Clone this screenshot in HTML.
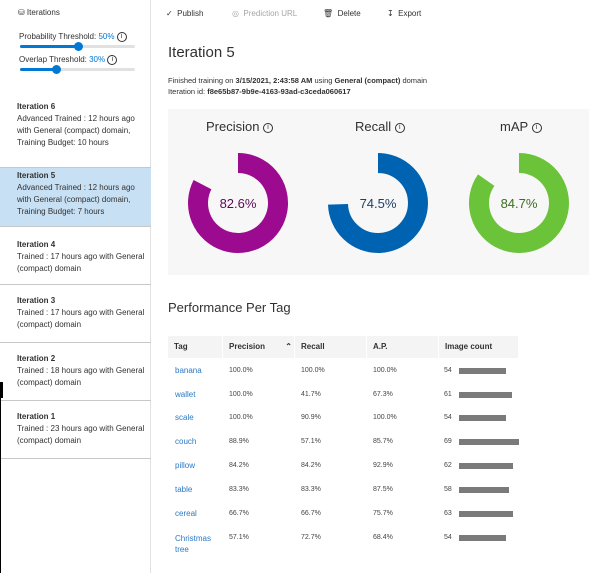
<!DOCTYPE html>
<html><head><meta charset="utf-8"><style>
*{margin:0;padding:0;box-sizing:border-box}
body{width:608px;height:573px;background:#fff;font-family:"Liberation Sans",sans-serif;color:#323130;position:relative;overflow:hidden;font-size:8px}
.a{position:absolute;white-space:nowrap}
.side{position:absolute;left:0;top:0;width:151px;height:573px;border-right:1px solid #e1e1e1}
.it{position:absolute;left:0;width:151px;border-bottom:1px solid #c8c8c8}
.it b{position:absolute;left:17px;font-size:8px;font-weight:bold;color:#323130}
.it p{position:absolute;left:17px;font-size:8px;line-height:12px;color:#323130}
.track{position:absolute;left:20px;width:115px;height:3px;background:#e1e1e1;border-radius:2px}
.fill{position:absolute;left:0;top:0;height:3px;background:#0078d4;border-radius:2px}
.knob{position:absolute;top:-3px;width:9px;height:9px;border-radius:50%;background:#0078d4}
.info{display:inline-block;width:10px;height:10px;border:1px solid #323130;border-radius:50%;font-size:7px;text-align:center;line-height:8px;vertical-align:middle}
.th{position:absolute;top:336px;height:22px;background:#f4f4f4;font-weight:bold;font-size:8px;line-height:22px;padding-left:6px}
.tag{color:#2b78c5;font-size:8px}
.c{font-size:7px;color:#444}
.bar{position:absolute;height:6px;background:#7a7a7a}
</style></head><body>
<div class="side">
<div class="a" style="left:18px;top:8px;font-size:8px">&#9921; Iterations</div>
<div class="a" style="left:19px;top:32px;font-size:8px">Probability Threshold: <span style="color:#0078d4">50%</span> <span class="info">i</span></div>
<div class="track" style="top:45px"><div class="fill" style="width:58px"></div><div class="knob" style="left:54px"></div></div>
<div class="a" style="left:19px;top:55px;font-size:8px">Overlap Threshold: <span style="color:#0078d4">30%</span> <span class="info">i</span></div>
<div class="track" style="top:68px"><div class="fill" style="width:36px"></div><div class="knob" style="left:32px"></div></div>
<div class="it" style="top:92px;height:76px"><b style="top:10px">Iteration 6</b><p style="top:21px">Advanced Trained : 12 hours ago<br>with General (compact) domain,<br>Training Budget: 10 hours</p></div>
<div class="it" style="top:168px;height:59px;background:#c7e0f4"><b style="top:3px">Iteration 5</b><p style="top:14px">Advanced Trained : 12 hours ago<br>with General (compact) domain,<br>Training Budget: 7 hours</p></div>
<div class="it" style="top:227px;height:58px"><b style="top:13px">Iteration 4</b><p style="top:24px">Trained : 17 hours ago with General<br>(compact) domain</p></div>
<div class="it" style="top:285px;height:58px"><b style="top:11px">Iteration 3</b><p style="top:22px">Trained : 17 hours ago with General<br>(compact) domain</p></div>
<div class="it" style="top:343px;height:58px"><b style="top:11px">Iteration 2</b><p style="top:22px">Trained : 18 hours ago with General<br>(compact) domain</p></div>
<div class="it" style="top:401px;height:58px"><b style="top:11px">Iteration 1</b><p style="top:22px">Trained : 23 hours ago with General<br>(compact) domain</p></div>
</div>
<div class="a" style="left:0;top:382px;width:3px;height:16px;background:#000"></div>
<div class="a" style="left:0;top:398px;width:1px;height:175px;background:#000"></div>

<div class="a" style="left:166px;top:9px;font-size:8px">&#10003;&nbsp; Publish</div>
<div class="a" style="left:232px;top:9px;font-size:8px;color:#a6a6a6">&#9678;&nbsp; Prediction URL</div>
<div class="a" style="left:323px;top:9px;font-size:8px">&#128465;&nbsp; Delete</div>
<div class="a" style="left:387px;top:9px;font-size:8px">&#8615;&nbsp; Export</div>
<div class="a" style="left:168px;top:44px;font-size:15px">Iteration 5</div>
<div class="a" style="left:168px;top:76px;font-size:7.5px">Finished training on <b>3/15/2021, 2:43:58 AM</b> using <b>General (compact)</b> domain</div>
<div class="a" style="left:168px;top:87px;font-size:7.5px">Iteration id: <b>f8e65b87-9b9e-4163-93ad-c3ceda060617</b></div>

<div class="a" style="left:168px;top:109px;width:421px;height:166px;background:#f7f7f7"></div>
<div class="a" style="left:206px;top:119px;font-size:13px">Precision <span class="info">i</span></div>
<div class="a" style="left:355px;top:119px;font-size:13px">Recall <span class="info">i</span></div>
<div class="a" style="left:500px;top:119px;font-size:13px">mAP <span class="info">i</span></div>
<svg style="position:absolute;left:0;top:0" width="608" height="300">
<g fill="none" stroke-width="20">
<path d="M238 163 A40 40 0 1 1 202.5 184.6" stroke="#9b0a8f"/>
<path d="M378 163 A40 40 0 1 1 338 204.3" stroke="#0063b1"/>
<path d="M519 163 A40 40 0 1 1 486.2 180.1" stroke="#6bc33a"/>
</g>
<g font-family="Liberation Sans" font-size="13" text-anchor="middle">
<text x="238" y="208" fill="#5b0a56">82.6%</text>
<text x="378" y="208" fill="#1f3f66">74.5%</text>
<text x="519" y="208" fill="#3e6e20">84.7%</text>
</g></svg>

<div class="a" style="left:168px;top:300px;font-size:13px">Performance Per Tag</div>
<div class="th" style="left:168px;width:54px">Tag</div>
<div class="th" style="left:223px;width:71px">Precision <span style="margin-left:18px">&#8963;</span></div>
<div class="th" style="left:295px;width:71px">Recall</div>
<div class="th" style="left:367px;width:71px">A.P.</div>
<div class="th" style="left:439px;width:79px">Image count</div>

<div class="a tag" style="left:175px;top:366px">banana</div><div class="a c" style="left:229px;top:367px">100.0%</div><div class="a c" style="left:301px;top:367px">100.0%</div><div class="a c" style="left:373px;top:367px">100.0%</div><div class="a c" style="left:444px;top:367px">54</div><div class="bar" style="left:459px;top:368px;width:47px"></div>
<div class="a tag" style="left:175px;top:390px">wallet</div><div class="a c" style="left:229px;top:391px">100.0%</div><div class="a c" style="left:301px;top:391px">41.7%</div><div class="a c" style="left:373px;top:391px">67.3%</div><div class="a c" style="left:444px;top:391px">61</div><div class="bar" style="left:459px;top:392px;width:53px"></div>
<div class="a tag" style="left:175px;top:413px">scale</div><div class="a c" style="left:229px;top:414px">100.0%</div><div class="a c" style="left:301px;top:414px">90.9%</div><div class="a c" style="left:373px;top:414px">100.0%</div><div class="a c" style="left:444px;top:414px">54</div><div class="bar" style="left:459px;top:415px;width:47px"></div>
<div class="a tag" style="left:175px;top:437px">couch</div><div class="a c" style="left:229px;top:438px">88.9%</div><div class="a c" style="left:301px;top:438px">57.1%</div><div class="a c" style="left:373px;top:438px">85.7%</div><div class="a c" style="left:444px;top:438px">69</div><div class="bar" style="left:459px;top:439px;width:60px"></div>
<div class="a tag" style="left:175px;top:461px">pillow</div><div class="a c" style="left:229px;top:462px">84.2%</div><div class="a c" style="left:301px;top:462px">84.2%</div><div class="a c" style="left:373px;top:462px">92.9%</div><div class="a c" style="left:444px;top:462px">62</div><div class="bar" style="left:459px;top:463px;width:54px"></div>
<div class="a tag" style="left:175px;top:485px">table</div><div class="a c" style="left:229px;top:486px">83.3%</div><div class="a c" style="left:301px;top:486px">83.3%</div><div class="a c" style="left:373px;top:486px">87.5%</div><div class="a c" style="left:444px;top:486px">58</div><div class="bar" style="left:459px;top:487px;width:50px"></div>
<div class="a tag" style="left:175px;top:509px">cereal</div><div class="a c" style="left:229px;top:510px">66.7%</div><div class="a c" style="left:301px;top:510px">66.7%</div><div class="a c" style="left:373px;top:510px">75.7%</div><div class="a c" style="left:444px;top:510px">63</div><div class="bar" style="left:459px;top:511px;width:54px"></div>
<div class="a tag" style="left:175px;top:533px;line-height:11px">Christmas<br>tree</div><div class="a c" style="left:229px;top:534px">57.1%</div><div class="a c" style="left:301px;top:534px">72.7%</div><div class="a c" style="left:373px;top:534px">68.4%</div><div class="a c" style="left:444px;top:534px">54</div><div class="bar" style="left:459px;top:535px;width:47px"></div>
</body></html>
